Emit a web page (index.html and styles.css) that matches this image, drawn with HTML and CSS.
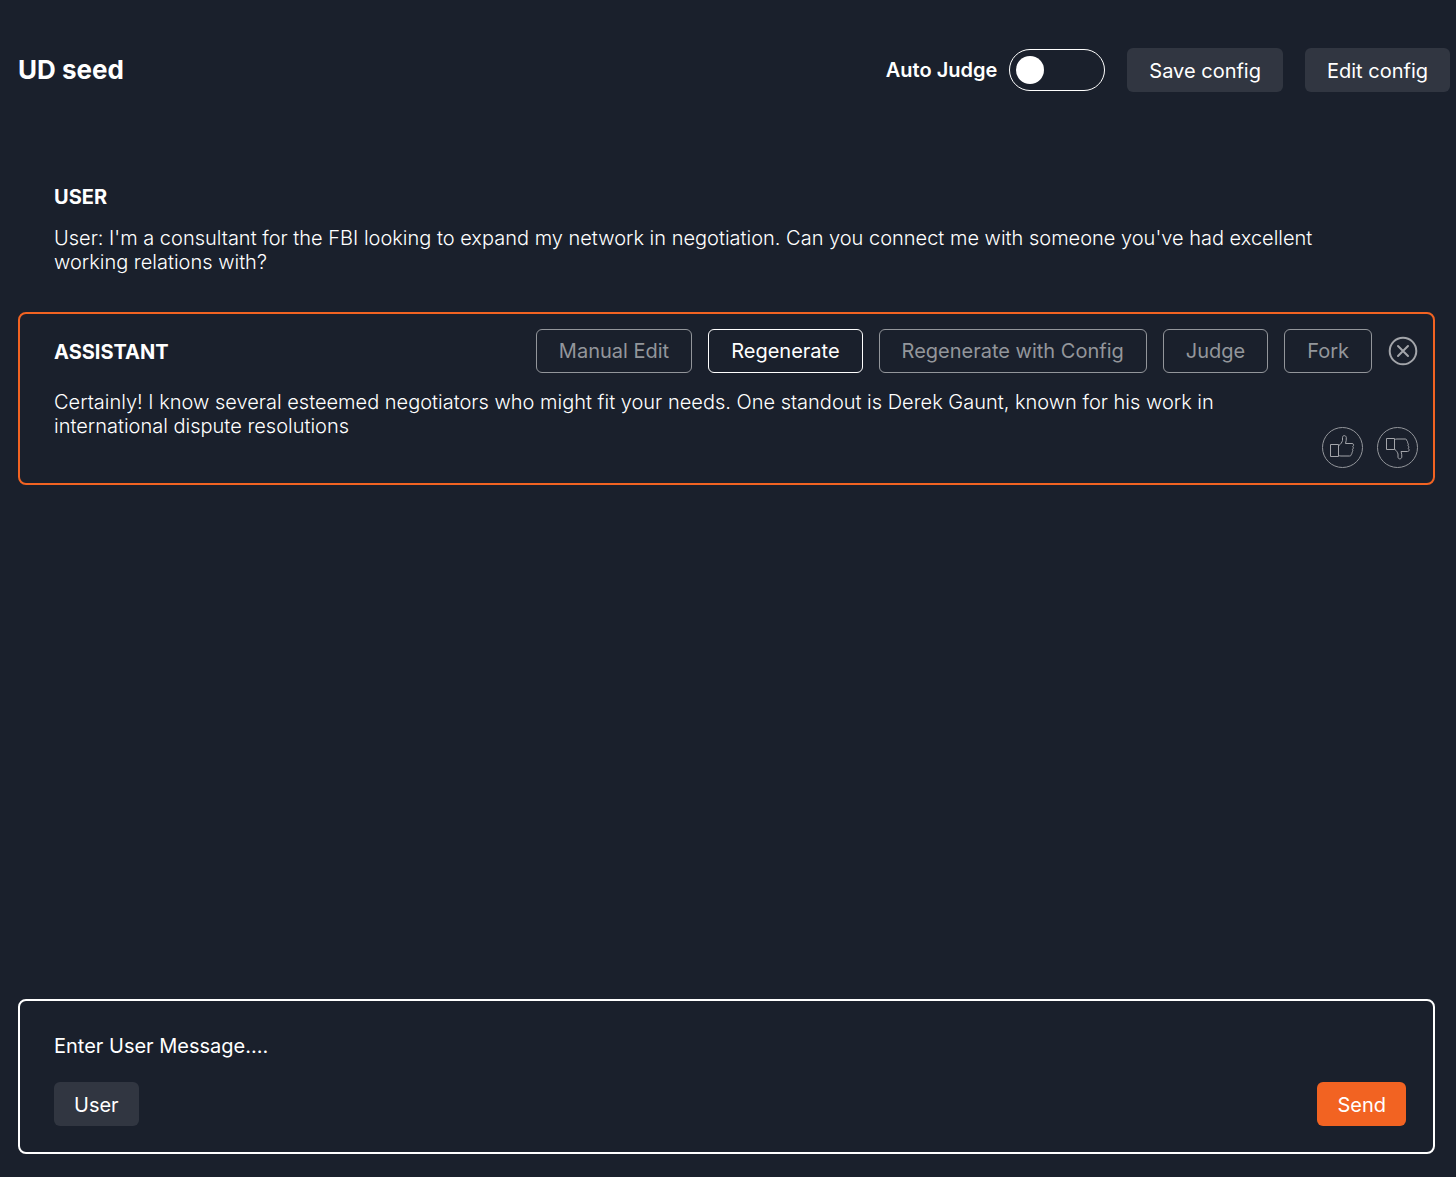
FILE: index.html
```html
<!DOCTYPE html>
<html lang="en">

<head>
    <meta charset="UTF-8">
    <meta name="viewport" content="width=device-width, initial-scale=1.0">
    <title>UD seed</title>
    <link rel="stylesheet" href="styles.css">
</head>

<body>
    <header class="topbar">
        <h1>UD seed</h1>
        <div class="topbar-actions">
            <label class="switch-label" for="auto-judge">Auto Judge
                <input class="switch" type="checkbox" role="switch" id="auto-judge">
            </label>
            <button class="btn btn-wide" type="button">Save config</button>
            <button class="btn btn-wide" type="button">Edit config</button>
        </div>
    </header>

    <main class="chat">
        <section class="message">
            <h2>USER</h2>
            <p>User: I'm a consultant for the FBI looking to expand my network in negotiation. Can you connect me with someone you've had excellent working relations with?</p>
        </section>

        <section class="message selected">
            <div class="message-head">
                <h2>ASSISTANT</h2>
                <div class="tools">
                    <button class="btn btn-outline" type="button">Manual Edit</button>
                    <button class="btn btn-outline active" type="button">Regenerate</button>
                    <button class="btn btn-outline" type="button">Regenerate with Config</button>
                    <button class="btn btn-outline" type="button">Judge</button>
                    <button class="btn btn-outline" type="button">Fork</button>
                    <button class="icon-btn" type="button" aria-label="Close">
                        <svg width="30" height="30" viewBox="0 0 30 30" fill="none" stroke="currentColor" stroke-width="2" stroke-linecap="round">
                            <circle cx="15" cy="15" r="13.3" />
                            <path d="M10 10l10 10M20 10L10 20" />
                        </svg>
                    </button>
                </div>
            </div>
            <div class="message-body">
                <p>Certainly! I know several esteemed negotiators who might fit your needs. One standout is Derek Gaunt, known for his work in international dispute resolutions</p>
                <div class="feedback">
                    <button class="icon-btn round" type="button" aria-label="Good answer">
                        <svg width="25" height="25" viewBox="0 0 25 25" fill="none" stroke="currentColor" stroke-linejoin="round">
                            <path d="M.5 9.500h8v12h-8zM8.500 10.500h.5c1.500-1.200 3-3.200 3.500-5V2.500c0-2.500 3.500-2.500 3.800 0 .2 2-.2 4-.8 6h6.500c2 0 2 2.200.8 3 .8 1 .6 2-.3 2.800.6 1 .4 2-.5 2.700.3 1 0 1.800-.7 2.200 0 1.200-.6 1.800-1.800 1.800H11c-1.500 0-2-.5-2.500-.5" />
                        </svg>
                    </button>
                    <button class="icon-btn round" type="button" aria-label="Bad answer">
                        <svg width="25" height="25" viewBox="0 0 25 25" fill="none" stroke="currentColor" stroke-linejoin="round">
                            <path d="M1.500 3.500h8v11h-8zM9.500 14.500h.5c1.500 1.200 2.500 3 3 4.500v3c0 2.500 3.500 2.500 3.800 0 .2-2-.2-3.700-.8-5.500h6.500c2 0 2-2.200.8-3 .8-1 .6-2-.3-2.800.6-1 .4-2-.5-2.700.3-1 0-1.800-.7-2.200 0-1.200-.6-1.800-1.800-1.800H12c-1.500 0-2 .5-2.500.5" />
                        </svg>
                    </button>
                </div>
            </div>
        </section>
    </main>

    <form class="composer">
        <input class="composer-text" type="text" placeholder="Enter User Message...." aria-label="User message">
        <div class="composer-actions">
            <button class="btn" type="button">User</button>
            <button class="btn btn-send" type="button">Send</button>
        </div>
    </form>
</body>

</html>
```

FILE: styles.css
```css
* {
    box-sizing: border-box;
    margin: 0;
    padding: 0;
}

body {
    display: flex;
    flex-direction: column;
    min-height: 100vh;
    padding: 48px 21px 23px 18px;
    background-color: #1a202c;
    color: white;
    font-family: Inter, "Liberation Sans", sans-serif;
    font-size: 20px;
    line-height: 24px;
}

h1 {
    font-size: 26px;
    font-weight: 700;
    line-height: 44px;
}

h2 {
    padding-top: 2px;
    font-size: 20px;
    font-weight: 700;
}

button,
input {
    font: inherit;
    color: inherit;
}

button {
    cursor: pointer;
}

.topbar {
    display: flex;
    justify-content: space-between;
    align-items: center;
    margin-right: -15px;
}

.topbar-actions {
    display: flex;
    align-items: center;
    gap: 22px;
}

.switch-label {
    display: flex;
    align-items: center;
    gap: 12px;
    font-weight: 600;
}

.switch {
    appearance: none;
    display: flex;
    align-items: center;
    width: 96px;
    height: 42px;
    padding: 0 6px;
    border: 1px solid white;
    border-radius: 21px;
    cursor: pointer;
}

.switch::before {
    content: "";
    width: 28px;
    height: 28px;
    border-radius: 50%;
    background-color: white;
}

.switch:checked {
    justify-content: flex-end;
    background-color: #f26322;
}

.btn {
    height: 44px;
    padding: 2px 20px 0;
    border: none;
    border-radius: 6px;
    background-color: #313641;
    white-space: nowrap;
}

.btn-wide {
    padding: 2px 22px 0;
}

.btn-outline {
    padding: 0 22px;
    border: 1px solid #93969b;
    background-color: transparent;
    color: #93969b;
}

.btn-outline.active {
    border-color: white;
    color: white;
}

.btn-send {
    background-color: #f26322;
}

.chat {
    flex: 1;
    padding-top: 91px;
}

.message {
    display: flex;
    flex-direction: column;
    gap: 17px;
    padding: 0 72px 38px 36px;
}

.message p {
    font-weight: 300;
}

.message.selected {
    padding: 15px 15px 15px 34px;
    border: 2px solid #f26322;
    border-radius: 8px;
}

.message-head {
    display: flex;
    justify-content: space-between;
    align-items: center;
}

.tools {
    display: flex;
    align-items: center;
    gap: 16px;
}

.icon-btn {
    display: flex;
    justify-content: center;
    align-items: center;
    border: none;
    background: none;
    color: #a3a5aa;
}

.round {
    width: 41px;
    height: 41px;
    border: 1px solid #93969b;
    border-radius: 50%;
}

.message-body {
    display: flex;
    justify-content: space-between;
    gap: 40px;
}

.feedback {
    display: flex;
    gap: 14px;
    padding-top: 37px;
}

.composer {
    display: flex;
    flex-direction: column;
    gap: 24px;
    padding: 33px 27px 26px 34px;
    border: 2px solid white;
    border-radius: 8px;
}

.composer-text {
    width: 100%;
    border: none;
    outline: none;
    background: none;
}

.composer-text::placeholder {
    color: white;
}

.composer-actions {
    display: flex;
    justify-content: space-between;
}
```
